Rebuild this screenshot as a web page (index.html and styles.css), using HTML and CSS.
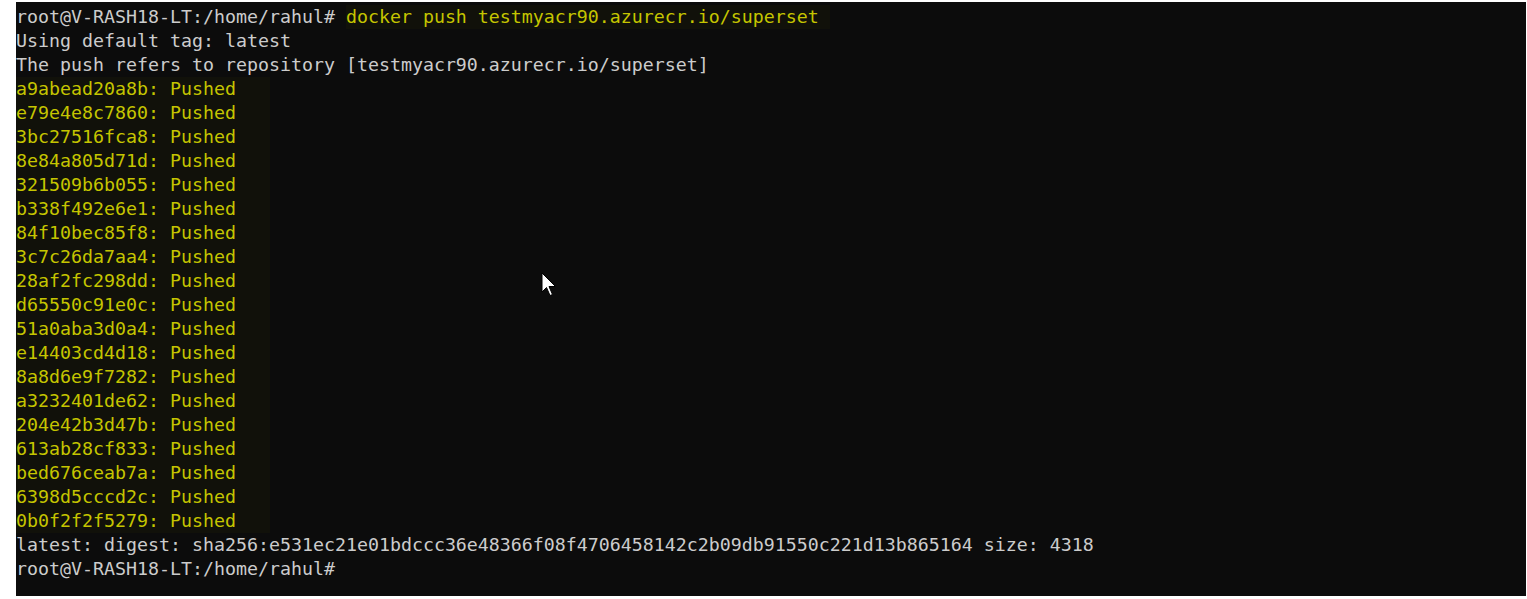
FILE: index.html
```html
<!DOCTYPE html>
<html lang="en">
<head>
  <meta charset="UTF-8" />
  <title>docker push</title>
  <link rel="stylesheet" href="styles.css">
</head>
<body>
  <div class="terminal">
    <div class="line"><span>root@V-RASH18-LT:/home/rahul# </span><span class="cmd">docker push testmyacr90.azurecr.io/superset</span></div>
    <div class="line">Using default tag: latest</div>
    <div class="line">The push refers to repository [testmyacr90.azurecr.io/superset]</div>
    <div class="pushed">
      <div class="line">a9abead20a8b: Pushed</div>
      <div class="line">e79e4e8c7860: Pushed</div>
      <div class="line">3bc27516fca8: Pushed</div>
      <div class="line">8e84a805d71d: Pushed</div>
      <div class="line">321509b6b055: Pushed</div>
      <div class="line">b338f492e6e1: Pushed</div>
      <div class="line">84f10bec85f8: Pushed</div>
      <div class="line">3c7c26da7aa4: Pushed</div>
      <div class="line">28af2fc298dd: Pushed</div>
      <div class="line">d65550c91e0c: Pushed</div>
      <div class="line">51a0aba3d0a4: Pushed</div>
      <div class="line">e14403cd4d18: Pushed</div>
      <div class="line">8a8d6e9f7282: Pushed</div>
      <div class="line">a3232401de62: Pushed</div>
      <div class="line">204e42b3d47b: Pushed</div>
      <div class="line">613ab28cf833: Pushed</div>
      <div class="line">bed676ceab7a: Pushed</div>
      <div class="line">6398d5cccd2c: Pushed</div>
      <div class="line">0b0f2f2f5279: Pushed</div>
    </div>
    <div class="line">latest: digest: sha256:e531ec21e01bdccc36e48366f08f4706458142c2b09db91550c221d13b865164 size: 4318</div>
    <div class="line">root@V-RASH18-LT:/home/rahul#</div>

    <!-- mouse pointer -->
    <svg class="pointer" width="18" height="26" viewBox="0 0 18 26">
      <path d="M1 1 L1 20 L5.5 15.5 L9 23.5 L11.5 22.5 L8 14.5 L14.5 14.5 Z" fill="#fff" stroke="#000" stroke-width="1"/>
    </svg>
  </div>
</body>
</html>
```

FILE: styles.css
```css
body {
  margin: 0;
  background-color: #fff;
}
.terminal {
  position: relative;
  margin: 2px 0 0 16px;
  width: 1510px;
  height: 594px;
  padding-top: 3px;
  box-sizing: border-box;
  background-color: #0c0c0c;
  color: #cccccc;
  font-family: "DejaVu Sans Mono", "Liberation Mono", monospace;
  font-size: 18.27px;
  overflow: hidden;
}
.line {
  height: 24px;
  line-height: 24px;
  white-space: pre;
}
.cmd {
  display: inline-block;
  width: 484px;
  color: #c5c500;
  background-color: #11110a;
}
.pushed {
  width: 254px;
  color: #c5c500;
  background-color: #11110a;
}
.pointer {
  position: absolute;
  left: 525px;
  top: 270px;
}
```
